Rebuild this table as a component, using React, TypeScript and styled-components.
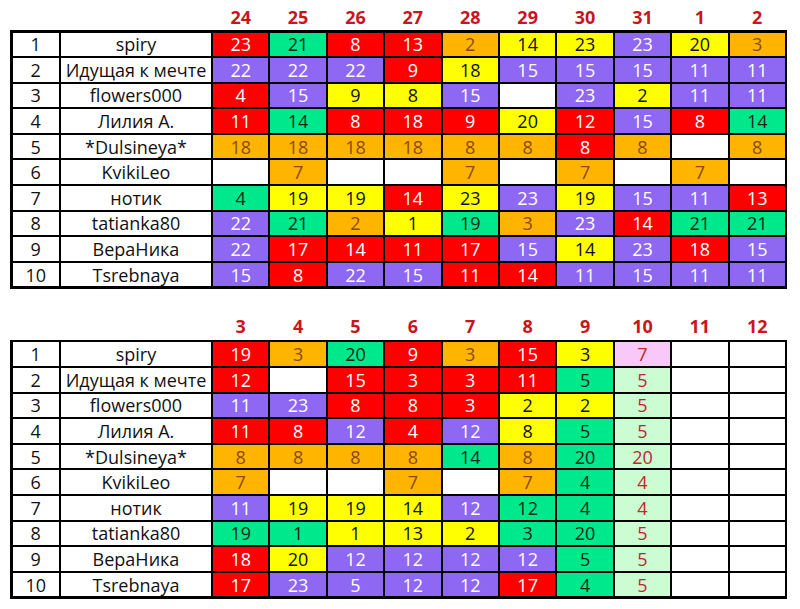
import React from "react";
import styled, { createGlobalStyle } from "styled-components";

const Global = createGlobalStyle`
  html, body { margin: 0; padding: 0; background: #ffffff; }
  body { font-family: "Open Sans", "Liberation Sans", sans-serif; }
`;

type Tone = "R" | "G" | "P" | "Y" | "O" | "K" | "L" | "W";

const tones: Record<Tone, { bg: string; fg: string }> = {
  R: { bg: "#ff0000", fg: "#ffffff" },
  G: { bg: "#00e88c", fg: "#0d2a16" },
  P: { bg: "#8e67f2", fg: "#ffffff" },
  Y: { bg: "#ffff00", fg: "#111111" },
  O: { bg: "#ffb400", fg: "#8c4a0c" },
  K: { bg: "#f8c8f8", fg: "#c0262d" },
  L: { bg: "#ccfcd2", fg: "#c0262d" },
  W: { bg: "#ffffff", fg: "#111111" },
};

const COLS = "46.5px 150px repeat(10, 55.4px)";

const Page = styled.div`
  padding: 0 0 0 10px;
  display: flex;
  flex-direction: column;
  gap: 21px;
  width: 790px;
`;

const Sheet = styled.section`
  display: flex;
  flex-direction: column;
`;

const HeaderRow = styled.div`
  display: grid;
  grid-template-columns: ${COLS};
  column-gap: 2px;
  padding: 3px 2.5px 0;
  height: 30px;
  box-sizing: border-box;
  align-items: center;
`;

const DayLabel = styled.div`
  text-align: center;
  font-weight: 700;
  font-size: 18px;
  color: #c8161d;
  line-height: 1;
`;

const Grid = styled.div`
  display: grid;
  grid-template-columns: ${COLS};
  grid-auto-rows: 23.6px;
  gap: 2px;
  padding: 2.5px;
  background: #000000;
  width: max-content;
`;

const Cell = styled.div<{ $tone: Tone }>`
  background: ${(p) => tones[p.$tone].bg};
  color: ${(p) => tones[p.$tone].fg};
  display: flex;
  align-items: center;
  justify-content: center;
  font-size: 18px;
  line-height: 1;
  white-space: nowrap;
  overflow: hidden;
`;

const names = [
  "spiry",
  "Идущая к мечте",
  "flowers000",
  "Лилия А.",
  "*Dulsineya*",
  "KvikiLeo",
  "нотик",
  "tatianka80",
  "ВераНика",
  "Tsrebnaya",
];

const parse = (s: string): [Tone, string][] =>
  s.split(" ").map((t) => [t[0] as Tone, t.slice(1)]);

const sheet1 = {
  days: ["24", "25", "26", "27", "28", "29", "30", "31", "1", "2"],
  rows: [
    "R23 G21 R8 R13 O2 Y14 Y23 P23 Y20 O3",
    "P22 P22 P22 R9 Y18 P15 P15 P15 P11 P11",
    "R4 P15 Y9 Y8 P15 W P23 Y2 P11 P11",
    "R11 G14 R8 R18 R9 Y20 R12 P15 R8 G14",
    "O18 O18 O18 O18 O8 O8 R8 O8 W O8",
    "W O7 W W O7 W O7 W O7 W",
    "G4 Y19 Y19 R14 Y23 P23 Y19 P15 P11 R13",
    "P22 G21 O2 Y1 G19 O3 P23 R14 G21 G21",
    "P22 R17 R14 R11 R17 P15 Y14 P23 R18 P15",
    "P15 R8 P22 P15 R11 R14 P11 P15 P11 P11",
  ].map(parse),
};

const sheet2 = {
  days: ["3", "4", "5", "6", "7", "8", "9", "10", "11", "12"],
  rows: [
    "R19 O3 G20 R9 O3 R15 Y3 K7 W W",
    "R12 W R15 R3 R3 R11 G5 L5 W W",
    "P11 P23 R8 R8 R3 Y2 Y2 L5 W W",
    "R11 R8 P12 R4 P12 Y8 G5 L5 W W",
    "O8 O8 O8 O8 G14 O8 G20 L20 W W",
    "O7 W W O7 W O7 G4 L4 W W",
    "P11 Y19 Y19 Y14 P12 G12 G4 L4 W W",
    "G19 G1 Y1 Y13 Y2 G3 G20 L5 W W",
    "R18 Y20 P12 P12 P12 P12 G5 L5 W W",
    "R17 P23 P5 P12 P12 R17 G4 L5 W W",
  ].map(parse),
};

function ScoreSheet({ days, rows }: { days: string[]; rows: [Tone, string][][] }) {
  return (
    <Sheet>
      <HeaderRow>
        <span />
        <span />
        {days.map((d) => (
          <DayLabel key={d}>{d}</DayLabel>
        ))}
      </HeaderRow>
      <Grid>
        {rows.map((row, i) => (
          <React.Fragment key={i}>
            <Cell $tone="W">{i + 1}</Cell>
            <Cell $tone="W">{names[i]}</Cell>
            {row.map(([tone, v], j) => (
              <Cell key={j} $tone={tone}>
                {v}
              </Cell>
            ))}
          </React.Fragment>
        ))}
      </Grid>
    </Sheet>
  );
}

export default function App() {
  return (
    <>
      <Global />
      <Page>
        <ScoreSheet {...sheet1} />
        <ScoreSheet {...sheet2} />
      </Page>
    </>
  );
}
